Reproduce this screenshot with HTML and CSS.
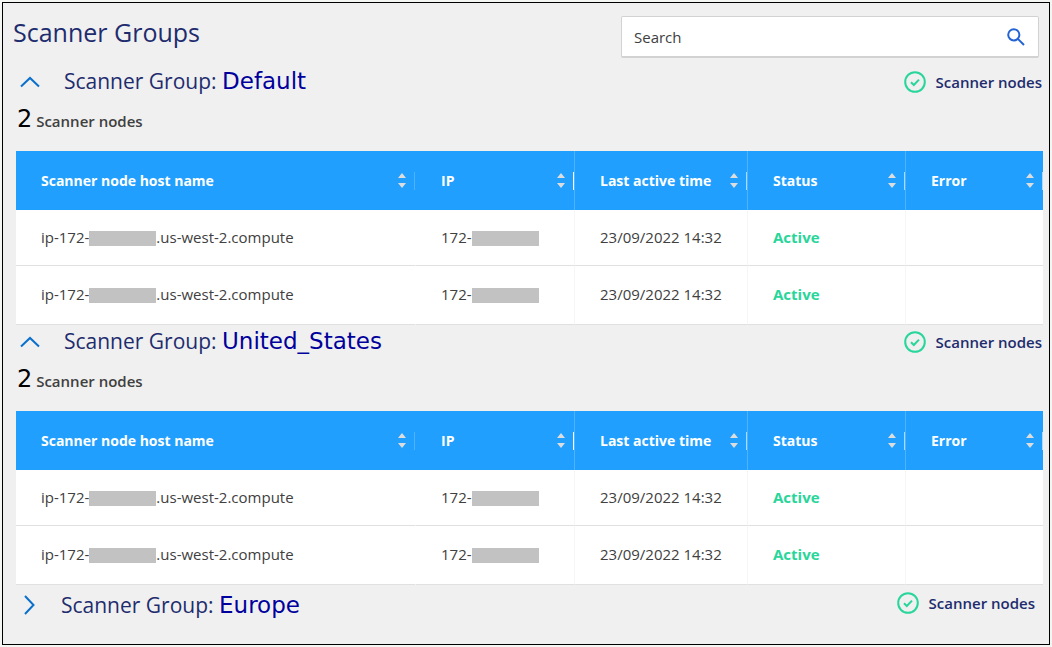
FILE: index.html
```
<!DOCTYPE html>
<html lang="en">
<head>
<meta charset="utf-8">
<title>Scanner Groups</title>
<meta name="viewport" content="width=device-width, initial-scale=1">
<link rel="stylesheet" href="styles.css">
</head>
<body>
<svg class="defs" aria-hidden="true">
  <symbol id="chevron-up" viewBox="0 0 20 20"><path d="M1 14.500 10 6l9 8.500"/></symbol>
  <symbol id="chevron-right" viewBox="0 0 20 20"><path d="M6 1 14.500 10 6 19"/></symbol>
  <symbol id="check" viewBox="0 0 22 22"><circle cx="11" cy="11" r="9.800"/><path d="M7 11.300 9.800 14 15 8.600"/></symbol>
  <symbol id="sort" viewBox="0 0 8 15"><path d="M0 5 4 0l4 5zM0 10h8l-4 5z"/></symbol>
</svg>
<main class="panel">
  <header class="top">
    <h1 class="title">Scanner Groups</h1>
    <form class="search" role="search">
      <input class="search-input" type="text" placeholder="Search" aria-label="Search">
      <button class="search-button" type="button" aria-label="Search">
        <svg class="search-icon" viewBox="0 0 18 18"><circle cx="6.800" cy="6.800" r="5.600"/><path d="M10.900 10.900 17 17"/></svg>
      </button>
    </form>
  </header>

  <section class="group">
    <div class="group-head">
      <button class="toggle" type="button" aria-expanded="true" aria-label="Collapse Default"><svg class="chevron"><use href="#chevron-up"/></svg></button>
      <h2 class="group-title">Scanner Group: <span class="group-name">Default</span></h2>
      <div class="state"><svg class="check"><use href="#check"/></svg>Scanner nodes</div>
    </div>
    <p class="count"><span class="count-value">2</span> Scanner nodes</p>
    <table class="nodes">
      <colgroup><col class="col-host"><col class="col-ip"><col class="col-time"><col class="col-status"><col class="col-error"></colgroup>
      <thead>
        <tr>
          <th scope="col"><div class="th th-faint">Scanner node host name<svg class="sort"><use href="#sort"/></svg></div></th>
          <th scope="col"><div class="th th-strong">IP<svg class="sort"><use href="#sort"/></svg></div></th>
          <th scope="col"><div class="th">Last active time<svg class="sort"><use href="#sort"/></svg></div></th>
          <th scope="col"><div class="th">Status<svg class="sort"><use href="#sort"/></svg></div></th>
          <th scope="col"><div class="th">Error<svg class="sort"><use href="#sort"/></svg></div></th>
        </tr>
      </thead>
      <tbody>
        <tr><td>ip-172-<span class="mask"></span>.us-west-2.compute</td><td>172-<span class="mask"></span></td><td>23/09/2022 14:32</td><td class="active">Active</td><td></td></tr>
        <tr><td>ip-172-<span class="mask"></span>.us-west-2.compute</td><td>172-<span class="mask"></span></td><td>23/09/2022 14:32</td><td class="active">Active</td><td></td></tr>
      </tbody>
    </table>
  </section>

  <section class="group">
    <div class="group-head">
      <button class="toggle" type="button" aria-expanded="true" aria-label="Collapse United_States"><svg class="chevron"><use href="#chevron-up"/></svg></button>
      <h2 class="group-title">Scanner Group: <span class="group-name">United_States</span></h2>
      <div class="state"><svg class="check"><use href="#check"/></svg>Scanner nodes</div>
    </div>
    <p class="count"><span class="count-value">2</span> Scanner nodes</p>
    <table class="nodes">
      <colgroup><col class="col-host"><col class="col-ip"><col class="col-time"><col class="col-status"><col class="col-error"></colgroup>
      <thead>
        <tr>
          <th scope="col"><div class="th th-faint">Scanner node host name<svg class="sort"><use href="#sort"/></svg></div></th>
          <th scope="col"><div class="th th-strong">IP<svg class="sort"><use href="#sort"/></svg></div></th>
          <th scope="col"><div class="th">Last active time<svg class="sort"><use href="#sort"/></svg></div></th>
          <th scope="col"><div class="th">Status<svg class="sort"><use href="#sort"/></svg></div></th>
          <th scope="col"><div class="th">Error<svg class="sort"><use href="#sort"/></svg></div></th>
        </tr>
      </thead>
      <tbody>
        <tr><td>ip-172-<span class="mask"></span>.us-west-2.compute</td><td>172-<span class="mask"></span></td><td>23/09/2022 14:32</td><td class="active">Active</td><td></td></tr>
        <tr><td>ip-172-<span class="mask"></span>.us-west-2.compute</td><td>172-<span class="mask"></span></td><td>23/09/2022 14:32</td><td class="active">Active</td><td></td></tr>
      </tbody>
    </table>
  </section>

  <section class="group group-closed">
    <div class="group-head">
      <button class="toggle" type="button" aria-expanded="false" aria-label="Expand Europe"><svg class="chevron"><use href="#chevron-right"/></svg></button>
      <h2 class="group-title">Scanner Group: <span class="group-name">Europe</span></h2>
      <div class="state"><svg class="check"><use href="#check"/></svg>Scanner nodes</div>
    </div>
  </section>
</main>
</body>
</html>
```
FILE: styles.css
```
* { box-sizing: border-box; }
body {
  margin: 0;
  padding: 2px;
  background: #f4f6f4;
  color: #404040;
  font: 14px/20px "Open Sans", sans-serif;
}
h1, h2, p { margin: 0; }
button { padding: 0; border: 0; background: none; cursor: pointer; }
svg { display: block; fill: none; }
.defs { position: absolute; width: 0; height: 0; }

.panel {
  background: #f0f0f0;
  border: 1px solid #000;
  padding: 0 6px 22px 13px;
}
.top {
  display: flex;
  justify-content: space-between;
  align-items: flex-start;
  padding: 13px 4px 7px 0;
}
.title {
  margin-left: -3px;
  color: #1e2c6e;
  font-size: 25px;
  font-weight: 400;
  line-height: 32px;
}
.search {
  display: flex;
  align-items: center;
  width: 418px;
  height: 42px;
  padding-right: 13px;
  background: #fff;
  border: 1px solid #d2d2d2;
  border-bottom-width: 2px;
  border-radius: 2px;
}
.search-input {
  flex: 1;
  min-width: 0;
  border: 0;
  outline: 0;
  padding: 0 12px;
  background: none;
  color: #404040;
  font: 15px/24px "Open Sans", sans-serif;
}
.search-input::placeholder { color: #404040; opacity: 1; }
.search-icon { width: 18px; height: 18px; stroke: #2463d6; stroke-width: 2; }

.group-head { display: flex; align-items: center; height: 34px; padding-right: 1px; }
.toggle { width: 20px; height: 20px; margin: 0 24px 0 4px; }
.chevron { width: 20px; height: 20px; stroke: #0a70cc; stroke-width: 2; }
.group-title {
  padding-bottom: 2px;
  color: #1e2c6e;
  font-size: 21px;
  font-weight: 400;
  line-height: 32px;
}
.group-name {
  color: #00009c;
  font-family: "DejaVu Sans", sans-serif;
  font-size: 23px;
}
.state {
  display: flex;
  align-items: center;
  gap: 10px;
  margin-left: auto;
  color: #1e2c6e;
  font-size: 15px;
  font-weight: 600;
}
.check { width: 22px; height: 22px; stroke: #28d69a; stroke-width: 2; }
.count {
  height: 52px;
  padding-left: 1px;
  font-size: 15px;
  font-weight: 600;
  line-height: 40px;
}
.count-value {
  color: #000;
  font-family: "DejaVu Sans", sans-serif;
  font-size: 24px;
  font-weight: 400;
}

.nodes { width: 100%; table-layout: fixed; border-collapse: separate; border-spacing: 0; background: #fff; }
.col-ip { width: 159px; }
.col-time { width: 173px; }
.col-status { width: 158px; }
.col-error { width: 137px; }
.nodes th {
  height: 59px;
  padding: 0;
  background: #209fff;
  color: #fff;
  font-weight: 700;
  text-align: left;
  border-right: 1px solid #4cb3ff;
}
.th {
  display: flex;
  align-items: center;
  justify-content: space-between;
  height: 18px;
  padding: 0 8px 0 25px;
  border-right: 1px solid #a8dbff;
}
.th-faint { border-right-color: #4cb3ff; }
.th-strong { border-right-color: #fff; }
.sort { width: 8px; height: 15px; fill: #ddd; }
.nodes td {
  height: 56px;
  padding: 0 0 2px 25px;
  font-size: 15px;
  white-space: nowrap;
  border-right: 1px solid #f6f6f6;
  border-bottom: 1px solid #e0e0e0;
}
.nodes tr + tr td { height: 59px; }
.nodes th:first-child, .nodes td:first-child { border-right-color: transparent; }
.nodes th:last-child, .nodes td:last-child { border-right: 0; }
.nodes .active { color: #28d69a; font-weight: 700; }
.mask { display: inline-block; width: 67px; height: 15px; background: #c2c2c2; vertical-align: -3px; }

.group-closed { padding-top: 3px; }
.group-closed .toggle { margin: 0 22px 0 3px; }
.group-closed .group-title { padding-bottom: 0; }
.group-closed .group-head { padding-right: 8px; }
.group-closed .state { padding-bottom: 4px; }
```
